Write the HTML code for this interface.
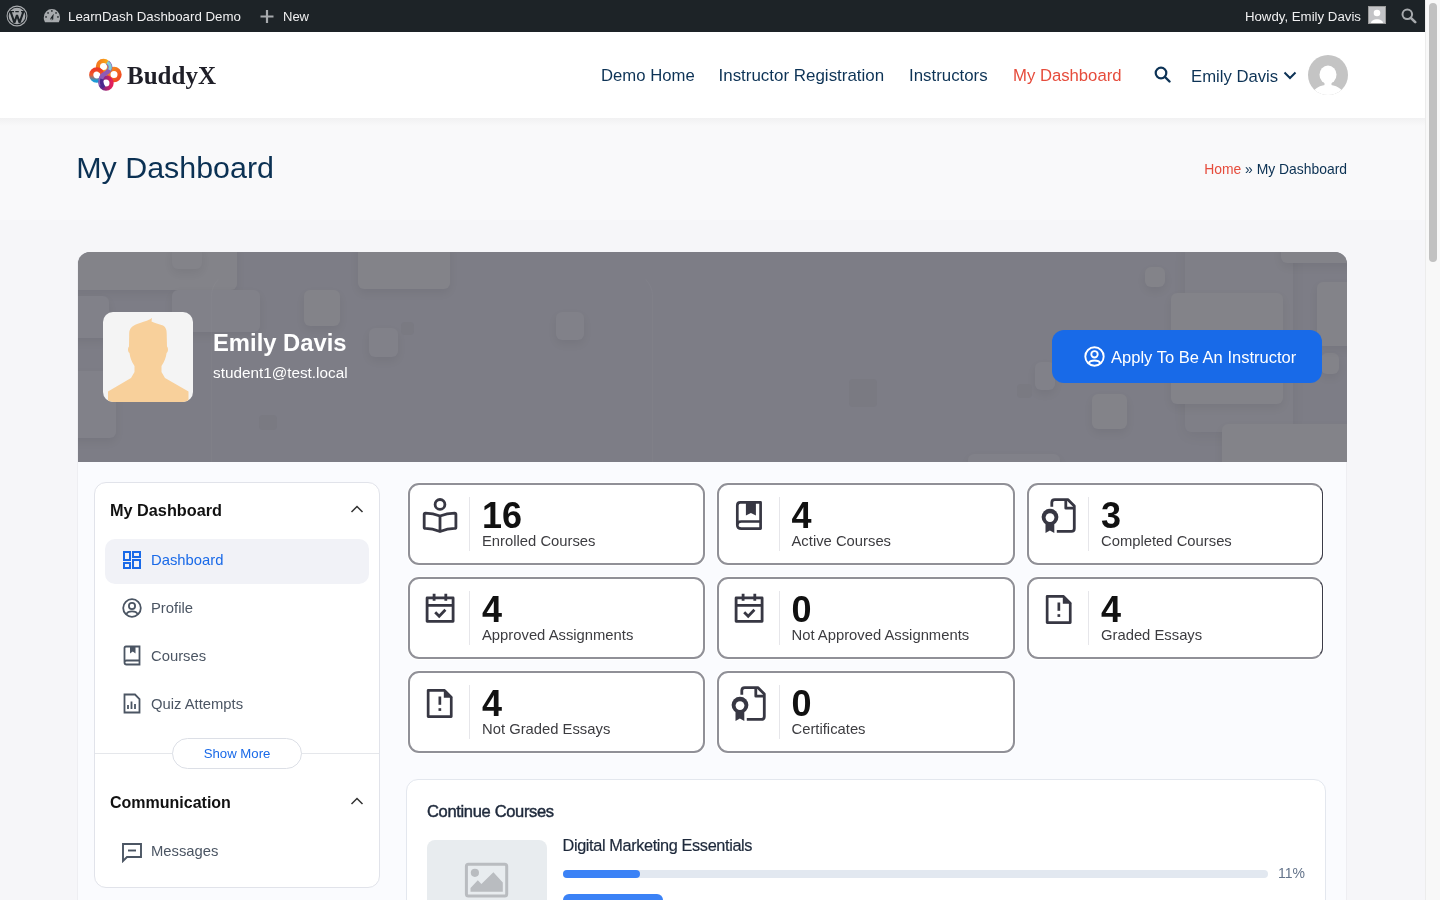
<!DOCTYPE html>
<html><head><meta charset="utf-8">
<style>
*{box-sizing:border-box;margin:0;padding:0}
html,body{width:1440px;height:900px;overflow:hidden;background:#f6f6f9;font-family:"Liberation Sans",sans-serif}
.a{position:absolute;white-space:nowrap}
#wrap{position:absolute;left:0;top:0;width:1440px;height:900px;will-change:transform}
#adminbar{position:absolute;left:0;top:0;width:1425px;height:32px;background:#1d2327}
#header{position:absolute;left:0;top:32px;width:1425px;height:86px;background:#fff}
#titleband{position:absolute;left:0;top:118px;width:1425px;height:102px;background:linear-gradient(#f1f1f2,#f9f9fa 8px)}
#scroll{position:absolute;left:1425px;top:0;width:15px;height:900px;background:#f8f8f8;border-left:1px solid #ececec}
#thumb{position:absolute;left:1429px;top:3px;width:8px;height:259px;background:#c1c1c1;border-radius:4px}
#panel{position:absolute;left:77px;top:252px;width:1270px;height:700px;background:#fafbfe;border-left:1px solid #eeeef2;border-right:1px solid #eeeef2;border-radius:12px 12px 0 0}
#banner{position:absolute;left:78px;top:252px;width:1269px;height:210px;background:#7d7d86;border-radius:12px 12px 0 0;overflow:hidden}
#banner .sq{position:absolute;background:#838389;border-radius:6px;box-shadow:0 4px 10px rgba(0,0,0,.06)}
#banner .dk{position:absolute;background:#7a7a82;border-radius:4px}
.nav{color:#0d3356;font-size:16.7px;line-height:16.7px}
.card{position:absolute;width:297.5px;height:82px;background:#fff;border:2px solid #909097;border-radius:11px;box-shadow:0 0 0 1px #fff}
.card .ic{position:absolute;left:-2px;top:-2px;width:80px;height:80px;overflow:visible}
.card .dv{position:absolute;left:59.5px;top:12px;width:1.2px;height:54px;background:#e6e6ea}
.card .num{position:absolute;left:72.5px;top:12.6px;font-size:36px;line-height:36px;font-weight:700;color:#111;white-space:nowrap}
.card .lbl{position:absolute;left:72.5px;top:49px;font-size:14.8px;line-height:14.8px;color:#3c3c40;white-space:nowrap}
.side{font-size:14.8px;line-height:14.8px;color:#4b5563}
</style></head><body><div id="wrap">

<div id="adminbar">
  <svg class="a" style="left:6px;top:5px" width="22" height="22" viewBox="0 0 22 22"><circle cx="11" cy="11" r="9.9" fill="none" stroke="#a7aaad" stroke-width="1.1"/><circle cx="11" cy="11" r="8.3" fill="#a7aaad"/><path d="M4.6 6.6 L8.4 17.6 L11 10 L13.6 17.6 L17.4 6.6" fill="none" stroke="#1d2327" stroke-width="2.1" stroke-linejoin="bevel"/><path d="M3.5 6.6 H8 M9.3 6.6 H12.8 M15 6.6 H18.5" stroke="#1d2327" stroke-width="1.2"/></svg>
  <svg class="a" style="left:42px;top:6px" width="20" height="18" viewBox="0 0 20 18"><path d="M3 16.2 L1.9 13.5 Q1.8 12.5 1.8 11.2 A8.1 8.1 0 0 1 18 11.2 Q18 12.5 17.9 13.5 L16.8 16.2Z" fill="#a7aaad"/><g fill="#1d2327"><rect x="9.1" y="4.2" width="1.5" height="1.5"/><rect x="5.3" y="6.2" width="1.5" height="1.5"/><rect x="13.3" y="6.2" width="1.5" height="1.5"/><rect x="3.3" y="10.2" width="1.5" height="1.5"/><rect x="15.2" y="10.2" width="1.5" height="1.5"/><path d="M8.3 13 Q8.5 11.5 11.8 7.8 Q11 12 11.3 13.2 A1.6 1.6 0 0 1 8.3 13Z"/></g><circle cx="9.8" cy="13.2" r="0.7" fill="#a7aaad"/></svg>
  <div class="a" style="left:68px;top:9.5px;font-size:13.3px;line-height:13.3px;color:#f0f0f1">LearnDash Dashboard Demo</div>
  <svg class="a" style="left:260px;top:10px" width="14" height="13" viewBox="0 0 14 13"><path d="M7 0v13M0.5 6.5h13" stroke="#a7aaad" stroke-width="2.2"/></svg>
  <div class="a" style="left:283px;top:9.8px;font-size:13px;line-height:13px;color:#f0f0f1">New</div>
  <div class="a" style="right:64px;top:9.5px;font-size:13.25px;line-height:13.25px;color:#f0f0f1">Howdy, Emily Davis</div>
  <div class="a" style="left:1368px;top:6px;width:18px;height:18px;background:#c3c4c7;border:1px solid #9a9a9a;overflow:hidden"><svg width="16" height="16" viewBox="0 0 16 16" style="display:block"><circle cx="8" cy="6" r="3.3" fill="#fff"/><path d="M2 16 C2.5 11 13.5 11 14 16Z" fill="#fff"/></svg></div>
  <svg class="a" style="left:1401px;top:8px" width="16" height="16" viewBox="0 0 16 16"><circle cx="6.3" cy="6.3" r="4.8" fill="none" stroke="#a7aaad" stroke-width="2"/><path d="M9.8 9.8 L14.2 14.2" stroke="#a7aaad" stroke-width="2.6" stroke-linecap="round"/></svg>
</div>

<div id="header">
  <svg class="a" style="left:89px;top:26px" width="33" height="33" viewBox="0 0 33 33">
    <defs>
      <linearGradient id="g1" x1="0" y1="0" x2="1" y2="0"><stop offset="0" stop-color="#f47a20"/><stop offset="1" stop-color="#fbb316"/></linearGradient>
      <linearGradient id="g2" x1="0" y1="0" x2="0" y2="1"><stop offset="0" stop-color="#ee3a24"/><stop offset="0.5" stop-color="#f1592a"/><stop offset="1" stop-color="#1c9ad6"/></linearGradient>
      <linearGradient id="g3" x1="0" y1="0" x2="1" y2="1"><stop offset="0" stop-color="#f7941d"/><stop offset="1" stop-color="#ef4123"/></linearGradient>
      <linearGradient id="g4" x1="0" y1="0" x2="1" y2="0"><stop offset="0" stop-color="#5b2c91"/><stop offset="1" stop-color="#e21f5a"/></linearGradient>
    </defs>
    <circle cx="14.5" cy="8.5" r="5.6" fill="none" stroke="url(#g1)" stroke-width="4.2"/>
    <circle cx="7.8" cy="17" r="5.6" fill="none" stroke="url(#g2)" stroke-width="4.2"/>
    <circle cx="25" cy="16.5" r="5.6" fill="none" stroke="url(#g3)" stroke-width="4.2"/>
    <circle cx="17" cy="25" r="5.6" fill="none" stroke="url(#g4)" stroke-width="4.2"/>
    <path d="M18.5 4.5 C23 8 21 13 17 15 C12 17.5 10.5 21 12.5 27" fill="none" stroke="#8e5bb5" stroke-width="4.6"/>
    <path d="M18.2 4.2 C21 6 22 9 20.5 12" fill="none" stroke="#7fd0d6" stroke-width="3"/>
    <path d="M13 21 C12 24 13 27 15 29.5" fill="none" stroke="#4a2a8e" stroke-width="3.5"/>
  </svg>
  <div class="a" style="left:127px;top:31px;font-family:'Liberation Serif',serif;font-weight:700;font-size:25px;line-height:25px;color:#1f1f28">BuddyX</div>
  <div class="a nav" style="left:601px;top:35.5px">Demo Home</div>
  <div class="a nav" style="left:718.5px;top:35.7px;font-size:16.95px">Instructor Registration</div>
  <div class="a nav" style="left:909px;top:35.7px;font-size:16.85px">Instructors</div>
  <div class="a nav" style="left:1013px;top:35.5px;color:#e64c3c">My Dashboard</div>
  <svg class="a" style="left:1154px;top:34px" width="17" height="17" viewBox="0 0 17 17"><circle cx="7" cy="7" r="5.3" fill="none" stroke="#0d3356" stroke-width="2.2"/><path d="M11 11 L15.5 15.5" stroke="#0d3356" stroke-width="2.4" stroke-linecap="round"/></svg>
  <div class="a nav" style="left:1191px;top:36.8px">Emily Davis</div>
  <svg class="a" style="left:1283px;top:38.5px" width="14" height="9" viewBox="0 0 14 9"><path d="M1.5 1.5 L7 7 L12.5 1.5" fill="none" stroke="#0d3356" stroke-width="2"/></svg>
  <div class="a" style="left:1307.5px;top:23px;width:40px;height:40px;border-radius:50%;background:#c4c4c4;overflow:hidden"><svg width="40" height="40" viewBox="0 0 40 40" style="display:block"><ellipse cx="20" cy="19.7" rx="8.5" ry="9.2" fill="#fff"/><path d="M-2 42 L6.5 34.7 C10 31.5 14 30.5 17 30 L23 30 C26 30.5 30 31.5 33.5 34.7 L42 42Z" fill="#fff"/><rect x="16.5" y="26" width="7" height="6" fill="#fff"/></svg></div>
</div>

<div id="titleband">
  <div class="a" style="left:76.3px;top:34.4px;font-size:30.4px;line-height:30.4px;color:#0b3153">My Dashboard</div>
  <div class="a" style="right:78px;top:44.6px;font-size:13.9px;line-height:13.9px;color:#0b3153"><span style="color:#e64c3c">Home</span> » My Dashboard</div>
</div>

<div id="scroll"></div><div id="thumb"></div>

<div id="panel"></div>

<div id="banner">
  <div class="sq" style="left:-10px;top:-10px;width:169px;height:48px"></div>
  <div class="sq" style="left:94px;top:-6px;width:30px;height:23px"></div>
  <div class="sq" style="left:94px;top:38px;width:88px;height:42px;background:#818189"></div>
  <div class="sq" style="left:-10px;top:44px;width:41px;height:42px;background:#818189"></div>
  <div class="sq" style="left:-10px;top:119px;width:48px;height:67px;background:#818189"></div>
  <div class="sq" style="left:226px;top:38px;width:36px;height:36px"></div>
  <div class="sq" style="left:280px;top:-10px;width:92px;height:47px"></div>
  <div class="sq" style="left:291px;top:76px;width:29px;height:29px;background:#818189"></div>
  <div class="dk" style="left:323px;top:70px;width:13px;height:13px"></div>
  <div class="sq" style="left:478px;top:60px;width:28px;height:28px;background:#818189"></div>
  <div class="dk" style="left:181px;top:163px;width:18px;height:15px"></div>
  <div class="dk" style="left:771px;top:127px;width:28px;height:28px"></div>
  <div class="sq" style="left:1107px;top:-10px;width:108px;height:190px;background:#7f7f87;box-shadow:0 4px 14px rgba(0,0,0,.05)"></div>
  <div class="sq" style="left:1067px;top:15px;width:20px;height:20px"></div>
  <div class="sq" style="left:1243px;top:101px;width:18px;height:21px"></div>
  <div class="sq" style="left:1093px;top:41px;width:112px;height:111px"></div>
  <div class="sq" style="left:1239px;top:30px;width:40px;height:64px"></div>
  <div class="sq" style="left:1203px;top:-10px;width:76px;height:21px"></div>
  <div class="sq" style="left:1014px;top:142px;width:35px;height:35px"></div>
  <div class="sq" style="left:1144px;top:172px;width:135px;height:50px"></div>
  <div class="sq" style="left:957px;top:110px;width:20px;height:28px;background:#818189"></div>
  <div class="dk" style="left:939px;top:132px;width:15px;height:14px"></div>
  <div class="sq" style="left:890px;top:202px;width:92px;height:20px;background:#818189"></div>
  <div class="a" style="left:133px;top:20px;width:442px;height:260px;border:1.5px solid rgba(255,255,255,.025);border-top-color:transparent;border-radius:24px"></div>
  <div class="a" style="left:25px;top:60px;width:90px;height:90px;border-radius:10px;background:#f4f4f4;overflow:hidden">
    <svg width="90" height="90" viewBox="0 0 90 90" style="display:block"><path d="M5 90 V79.5 L28 66 L31.5 60 L31.5 54 C28.5 50 27 45 26.5 41 C24.8 40 24.5 36 26 34.5 L26.2 21 C26.5 15 31 13 37 11 C42 9.5 46 8 49 6 L48.5 9.5 C51 11 56 12 60 13.5 C63 15.5 63.7 18 63.7 22 L64 34.5 C65.5 36 65.3 40 63.6 41 C63 45 61.5 50 58.5 54 L58.5 60 L62 66 L85.5 79.5 V90 Z" fill="#f8d09b"/></svg>
  </div>
  <div class="a" style="left:135px;top:79px;font-size:23.8px;line-height:23.8px;font-weight:700;color:#fff">Emily Davis</div>
  <div class="a" style="left:135px;top:112.5px;font-size:15.3px;line-height:15.3px;color:#fff">student1@test.local</div>
  <div class="a" style="left:974px;top:78px;width:270px;height:53px;background:#186ae8;border-radius:12px">
    <svg class="a" style="left:32px;top:16px" width="21" height="21" viewBox="0 0 21 21"><circle cx="10.5" cy="10.5" r="9.2" fill="none" stroke="#fff" stroke-width="1.9"/><circle cx="10.5" cy="8.3" r="3.2" fill="none" stroke="#fff" stroke-width="1.9"/><path d="M4.6 17.2 C6.5 13.5 14.5 13.5 16.4 17.2" fill="none" stroke="#fff" stroke-width="1.9"/></svg>
    <div class="a" style="left:59px;top:19.8px;font-size:16.55px;line-height:16.55px;color:#fff">Apply To Be An Instructor</div>
  </div>
</div>

<!-- sidebar -->
<div class="a" style="left:94px;top:482px;width:286px;height:406px;background:#fff;border:1px solid #e1e3ea;border-radius:12px"></div>
<div class="a" style="left:110px;top:502.4px;font-size:16.26px;line-height:16.26px;font-weight:700;color:#111">My Dashboard</div>
<svg class="a" style="left:350px;top:504px" width="14" height="10" viewBox="0 0 14 10"><path d="M1.5 8 L7 2.5 L12.5 8" fill="none" stroke="#333" stroke-width="1.5"/></svg>
<div class="a" style="left:105px;top:538.5px;width:264px;height:45.5px;background:#f1f2f7;border-radius:10px"></div>
<svg class="a" style="left:122px;top:550px" width="20" height="20" viewBox="0 0 20 20"><g fill="none" stroke="#1a6ae8" stroke-width="2"><rect x="2" y="2" width="6" height="8"/><rect x="2" y="13" width="6" height="5"/><rect x="11" y="2" width="7" height="5"/><rect x="11" y="10" width="7" height="8"/></g></svg>
<div class="a side" style="left:151px;top:553.2px;color:#1a6ae8">Dashboard</div>
<svg class="a" style="left:122px;top:598px" width="20" height="20" viewBox="0 0 20 20"><g fill="none" stroke="#4b5563" stroke-width="1.8"><circle cx="10" cy="10" r="8.8"/><circle cx="10" cy="8" r="3.1"/><path d="M4.5 16 C6 12.6 14 12.6 15.5 16"/></g></svg>
<div class="a side" style="left:151px;top:601.0px">Profile</div>
<svg class="a" style="left:122px;top:645px" width="20" height="21" viewBox="0 0 20 21"><g fill="none" stroke="#4b5563" stroke-width="1.8"><path d="M2.5 17 V3 Q2.5 1.5 4 1.5 H17.5 V19.5 H4.5 Q2.5 19.5 2.5 17.5 Q2.5 15.5 4.5 15.5 H17.5"/></g><path d="M8 1.5 H13.5 V8.5 L10.75 6.5 L8 8.5Z" fill="#4b5563"/></svg>
<div class="a side" style="left:151px;top:649.4px">Courses</div>
<svg class="a" style="left:122px;top:693px" width="20" height="21" viewBox="0 0 20 21"><g fill="none" stroke="#4b5563" stroke-width="1.8"><path d="M2.5 1.5 H13 L17.5 6 V19.5 H2.5Z"/></g><path d="M6 16 V12 M9.5 16 V8.5 M13 16 V11" stroke="#4b5563" stroke-width="1.8"/></svg>
<div class="a side" style="left:151px;top:697.2px">Quiz Attempts</div>
<div class="a" style="left:95px;top:753px;width:284px;height:1px;background:#e5e7eb"></div>
<div class="a" style="left:172px;top:738.2px;width:130px;height:31.3px;background:#fff;border:1px solid #dcdfe6;border-radius:16px"></div>
<div class="a" style="left:203.7px;top:746.8px;font-size:13.2px;line-height:13.2px;color:#1a6ae8">Show More</div>
<div class="a" style="left:110px;top:794.8px;font-size:16px;line-height:16px;font-weight:700;color:#111">Communication</div>
<svg class="a" style="left:350px;top:796px" width="14" height="10" viewBox="0 0 14 10"><path d="M1.5 8 L7 2.5 L12.5 8" fill="none" stroke="#333" stroke-width="1.5"/></svg>
<svg class="a" style="left:121px;top:842px" width="22" height="21" viewBox="0 0 22 21"><g fill="none" stroke="#4b5563" stroke-width="1.9"><path d="M2 19 V2 H20 V15 H6 Z"/><path d="M7 8.5 H15"/></g></svg>
<div class="a side" style="left:151px;top:844.3px">Messages</div>

<!-- stat cards -->
<div class="card" style="left:407.5px;top:483px"><svg class="ic" width="80" height="80" viewBox="0 0 80 80"><g fill="none" stroke="#373743" stroke-width="2.8" stroke-linejoin="round" stroke-linecap="round"><circle cx="32" cy="21.4" r="4.9"/><path d="M32 33 C27 31 21 30.2 17.5 30.2 Q16.2 30.2 16.2 31.5 V44.2 Q16.2 45.4 17.5 45.4 C21 45.4 27 46.5 32 48.5 C37 46.5 43 45.4 46.6 45.4 Q47.9 45.4 47.9 44.2 V31.5 Q47.9 30.2 46.6 30.2 C43 30.2 37 31 32 33 V48.5"/></g></svg><div class="dv"></div><div class="num">16</div><div class="lbl">Enrolled Courses</div></div>
<div class="card" style="left:717px;top:483px"><svg class="ic" width="80" height="80" viewBox="0 0 80 80"><g fill="none" stroke="#373743" stroke-width="2.7" stroke-linejoin="round"><path d="M20.3 42 V22.4 Q20.3 19.4 23.3 19.4 H43.6 V45.6 H24.3 Q20.3 45.6 20.3 42 Q20.3 38.5 24.3 38.5 H43.6"/></g><path d="M28.9 19 H38.9 V32.5 L33.9 29.9 L28.9 32.5Z" fill="#373743"/></svg><div class="dv"></div><div class="num">4</div><div class="lbl">Active Courses</div></div>
<div class="card" style="left:1026.5px;top:483px;width:296.5px;border-right:1px solid #3b3b48"><svg class="ic" width="80" height="80" viewBox="0 0 80 80"><g fill="none" stroke="#373743" stroke-width="2.8" stroke-linejoin="round"><path d="M24.8 23.7 V19.6 Q24.8 16.6 27.8 16.6 H40.8 L47.3 23.1 V45.4 Q47.3 48.4 44.3 48.4 H29.8"/><path d="M38.8 16.6 V25.2 H47.3"/></g><circle cx="23" cy="34.1" r="8.4" fill="#373743"/><circle cx="23" cy="34.6" r="4.4" fill="#fff"/><path d="M18.5 39 V50.1 L22.9 47.4 L27.3 50.1 V39Z" fill="#373743"/></svg><div class="dv"></div><div class="num">3</div><div class="lbl">Completed Courses</div></div>
<div class="card" style="left:407.5px;top:577px"><svg class="ic" width="80" height="80" viewBox="0 0 80 80"><g fill="none" stroke="#373743" stroke-width="2.8"><path d="M19.1 20.9 H45.1 V44.3 H19.1Z" stroke-linejoin="round"/><path d="M19.1 28.3 H45.1 M26.1 16.8 V23.7 M37.8 16.8 V23.7"/><path d="M27.2 35.2 L31.2 39.2 L37.4 32.8"/></g></svg><div class="dv"></div><div class="num">4</div><div class="lbl">Approved Assignments</div></div>
<div class="card" style="left:717px;top:577px"><svg class="ic" width="80" height="80" viewBox="0 0 80 80"><g fill="none" stroke="#373743" stroke-width="2.8"><path d="M19.1 20.9 H45.1 V44.3 H19.1Z" stroke-linejoin="round"/><path d="M19.1 28.3 H45.1 M26.1 16.8 V23.7 M37.8 16.8 V23.7"/><path d="M27.2 35.2 L31.2 39.2 L37.4 32.8"/></g></svg><div class="dv"></div><div class="num">0</div><div class="lbl">Not Approved Assignments</div></div>
<div class="card" style="left:1026.5px;top:577px;width:296.5px;border-right:1px solid #3b3b48"><svg class="ic" width="80" height="80" viewBox="0 0 80 80"><g fill="none" stroke="#373743" stroke-width="2.7" stroke-linejoin="round"><path d="M20.15 19.35 H36.5 L43.25 26.1 V45.55 H20.15Z"/></g><path d="M35.8 18 L44.6 26.8 H35.8Z" fill="#373743"/><path d="M31.85 25.5 V33.8" stroke="#373743" stroke-width="2.7"/><rect x="30.5" y="37.2" width="2.7" height="2.7" fill="#373743"/></svg><div class="dv"></div><div class="num">4</div><div class="lbl">Graded Essays</div></div>
<div class="card" style="left:407.5px;top:671px"><svg class="ic" width="80" height="80" viewBox="0 0 80 80"><g fill="none" stroke="#373743" stroke-width="2.7" stroke-linejoin="round"><path d="M20.15 19.35 H36.5 L43.25 26.1 V45.55 H20.15Z"/></g><path d="M35.8 18 L44.6 26.8 H35.8Z" fill="#373743"/><path d="M31.85 25.5 V33.8" stroke="#373743" stroke-width="2.7"/><rect x="30.5" y="37.2" width="2.7" height="2.7" fill="#373743"/></svg><div class="dv"></div><div class="num">4</div><div class="lbl">Not Graded Essays</div></div>
<div class="card" style="left:717px;top:671px"><svg class="ic" width="80" height="80" viewBox="0 0 80 80"><g fill="none" stroke="#373743" stroke-width="2.8" stroke-linejoin="round"><path d="M24.8 23.7 V19.6 Q24.8 16.6 27.8 16.6 H40.8 L47.3 23.1 V45.4 Q47.3 48.4 44.3 48.4 H29.8"/><path d="M38.8 16.6 V25.2 H47.3"/></g><circle cx="23" cy="34.1" r="8.4" fill="#373743"/><circle cx="23" cy="34.6" r="4.4" fill="#fff"/><path d="M18.5 39 V50.1 L22.9 47.4 L27.3 50.1 V39Z" fill="#373743"/></svg><div class="dv"></div><div class="num">0</div><div class="lbl">Certificates</div></div>
<!-- continue courses -->
<div class="a" style="left:406px;top:779px;width:920px;height:200px;background:#fff;border:1px solid #e3e7ee;border-radius:12px"></div>
<div class="a" style="left:427px;top:802.7px;font-size:16.5px;line-height:16.5px;letter-spacing:-0.33px;-webkit-text-stroke:0.45px #1e293b;color:#1e293b">Continue Courses</div>
<div class="a" style="left:426.6px;top:840.2px;width:120px;height:100px;background:#e8ecef;border-radius:8px"></div>
<svg class="a" style="left:464px;top:862px" width="46" height="38" viewBox="0 0 46 38"><rect x="2.4" y="2.3" width="40.3" height="31.7" rx="2" fill="none" stroke="#b9bcc0" stroke-width="3"/><circle cx="10.9" cy="10.8" r="4.1" fill="#b9bcc0"/><path d="M6.5 29.7 V26 L13.8 18.3 L17.4 21.9 L29.4 10.3 L38.8 20.5 V29.7Z" fill="#b9bcc0"/></svg>
<div class="a" style="left:562.5px;top:836.8px;font-size:16.3px;line-height:16.3px;letter-spacing:-0.37px;-webkit-text-stroke:0.2px #1e293b;color:#1e293b">Digital Marketing Essentials</div>
<div class="a" style="left:563px;top:870px;width:705px;height:8px;background:#e2e8f0;border-radius:4px"></div>
<div class="a" style="left:563px;top:870px;width:77px;height:8px;background:#3b82f6;border-radius:4px"></div>
<div class="a" style="left:1278px;top:866.4px;font-size:14px;line-height:14px;color:#64748b">11%</div>
<div class="a" style="left:563px;top:894px;width:100px;height:30px;background:#3b82f6;border-radius:6px"></div>

</div></body></html>
